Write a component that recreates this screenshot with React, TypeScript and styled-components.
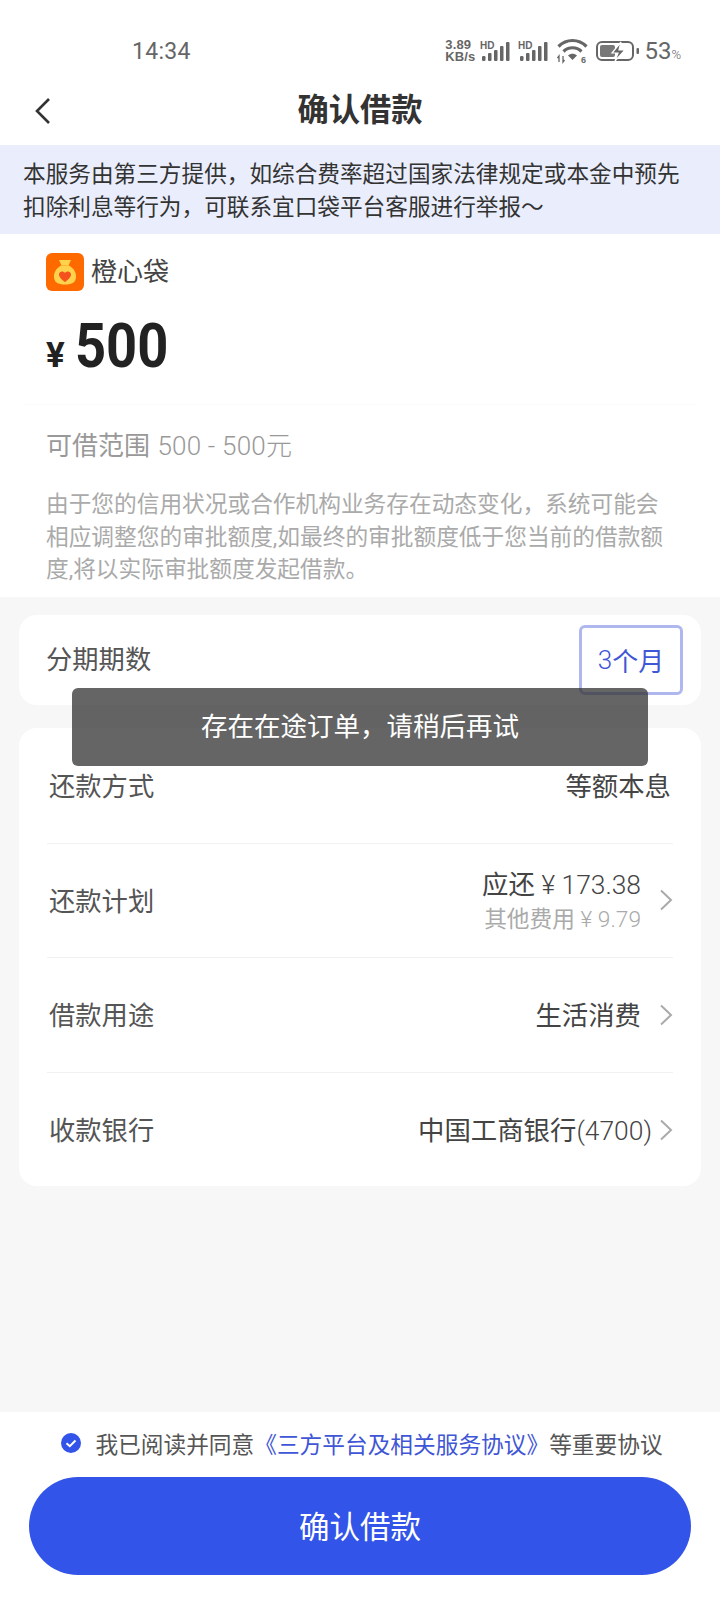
import React from "react";
import styled, { createGlobalStyle } from "styled-components";

const Global = createGlobalStyle`
  html, body { margin: 0; padding: 0; background: #fff; }
  * { box-sizing: border-box; }
`;
const Page = styled.div`
  position: relative; width: 720px; height: 1600px; display: flex; flex-direction: column;
  background: #f7f7f7; overflow: hidden;
  font-family: Roboto, "Noto Sans CJK SC", sans-serif; color: #333;
`;
const StatusBar = styled.div`
  height: 78px; background: #fff; display: flex; align-items: center; justify-content: space-between;
  padding: 24px 39px 0 132px; flex: none;
`;
const Time = styled.span`font-size: 23px; color: #666; letter-spacing: .3px;`;
const StatusRight = styled.div`display: flex; align-items: center;`;
const Speed = styled.div`
  display: flex; flex-direction: column; font-size: 13px; line-height: 12px; font-weight: 700; color: #666;
  font-family: "Liberation Sans", sans-serif; margin-right: 5px; letter-spacing: .1px;
`;
const Battery = styled.span`font-size: 24px; color: #666; margin-left: 4px; display: flex; align-items: baseline;`;
const Percent = styled.span`font-size: 13px; font-weight: 300;`;
const NavBar = styled.div`
  height: 67px; padding-bottom: 8px; background: #fff; display: flex; align-items: center; justify-content: center; position: relative; flex: none;
`;
const BackIcon = styled.svg`position: absolute; left: 34px; top: 19px;`;
const Title = styled.div`font-size: 31.3px; font-weight: 700; color: #333;`;
const Notice = styled.div`
  height: 89px; background: #eaeefc; padding: 13px 20px 0 23px; font-size: 22.65px; line-height: 33px; color: #333; flex: none;
  white-space: nowrap;
`;
const Summary = styled.div`background: #fff; height: 363px; padding: 19px 23px 0 46px; flex: none;`;
const Lender = styled.div`display: flex; align-items: center; gap: 7px; height: 38px;`;
const LenderName = styled.span`font-size: 26px; color: #444; margin-top: -5px;`;
const Amount = styled.div`display: flex; align-items: baseline; height: 74px; margin-top: 18px; line-height: 74px; color: #222; font-weight: 700;`;
const Yen = styled.span`font-size: 35px; margin-right: 10px;`;
const Money = styled.span`font-size: 62px; display: inline-block; transform: scaleX(.875); transform-origin: left center;`;
const Range = styled.div`
  margin: 21px 0 0 -23px; padding: 21px 0 0 23px; border-top: 1px solid #fafafa; font-size: 26px; line-height: 40px; color: #999;
`;
const RangeNum = styled.span`font-size: 26px; font-weight: 300; margin-left: 1px; letter-spacing: .2px;`;
const Hint = styled.div`margin-top: 23px; font-size: 22.7px; line-height: 32.5px; color: #aaa; white-space: nowrap;`;
const Card = styled.div`background: #fff; border-radius: 18px; margin: 0 19px; flex: none;`;
const TermCard = styled(Card)`
  margin-top: 18px; height: 90px; display: flex; align-items: center; justify-content: space-between; padding: 0 18px 0 27px;
`;
const TermLabel = styled.span`font-size: 26.3px; color: #555; margin-top: -6px;`;
const TermBox = styled.div`
  width: 104px; height: 70px; border: 3px solid #aeb8ee; border-radius: 6px; color: #3f56d6; font-size: 26px;
  display: flex; align-items: center; justify-content: center; padding-bottom: 1px;
`;
const Num = styled.span`font-weight: 300;`;
const DetailCard = styled(Card)`margin-top: 23px; height: 458px; padding: 0 28px;`;
const Row = styled.div`
  height: 114.6px; display: flex; align-items: center; justify-content: space-between;
  & + & { border-top: 1px solid #f1f1f1; }
`;
const RowLabel = styled.span`font-size: 26.3px; color: #555; margin: -2px 0 0 2px;`;
const RowRight = styled.div`display: flex; align-items: center;`;
const Value = styled.span`font-size: 26.4px; color: #444; white-space: nowrap; margin-top: -2px;`;
const PlainValue = styled(Value)`margin-right: 2px;`;
const Stack = styled.div`display: flex; flex-direction: column; align-items: flex-end; margin-top: 4px;`;
const Primary = styled.span`font-size: 26.4px; line-height: 35px; color: #444; white-space: nowrap;`;
const Secondary = styled.span`font-size: 22.7px; line-height: 33px; color: #aaa; white-space: nowrap;`;
const Chevron = styled.svg<{ $gap: number }>`margin-left: ${(p) => p.$gap}px; flex: none;`;
const Spacer = styled.div`flex: 1;`;
const Footer = styled.div`background: #fff; height: 188px; padding: 14px 29px 0; flex: none;`;
const Agree = styled.div`
  height: 34px; display: flex; align-items: center; justify-content: center; font-size: 22.7px; color: #555; white-space: nowrap; margin-left: 4px;
`;
const Check = styled.svg`margin-right: 14px; flex: none;`;
const Link = styled.span`color: #3f56d6;`;
const Submit = styled.button`
  display: block; width: 662px; height: 98px; margin-top: 17px; border: 0; border-radius: 49px; background: #3354e8;
  color: #fff; font-family: inherit; font-size: 30.5px; padding: 0 0 3px;
`;
const Toast = styled.div`
  position: absolute; left: 72px; top: 688px; width: 576px; height: 78px; border-radius: 6px;
  background: rgba(50,50,50,.75); color: #fff; font-size: 26.5px; display: flex; align-items: center; justify-content: center; padding-bottom: 6px;
`;

const Signal = () => (
  <svg width="32" height="21" viewBox="0 0 32 21" style={{ marginRight: 6 }}>
    <text x="0" y="8" fontSize="10" fontWeight="700" fontFamily="Liberation Sans" fill="#666">HD</text>
    <g fill="#666">
      <rect x="2" y="15" width="3.500" height="5" rx="1.200" /><rect x="8" y="12" width="3.500" height="8" rx="1" />
      <rect x="14" y="9" width="3.500" height="11" rx="1" /><rect x="20" y="5" width="3.500" height="15" rx="1" />
      <rect x="26" y="1" width="3.500" height="19" rx="1" />
    </g>
  </svg>
);
const Chev = ({ gap = 18 }: { gap?: number }) => (
  <Chevron $gap={gap} width="14" height="22" viewBox="0 0 14 22"><path d="M2 1.500 12 11 2 20.500" fill="none" stroke="#aaa" strokeWidth="2" /></Chevron>
);

export default function App() {
  return (
    <Page>
      <Global />
      <StatusBar>
        <Time>14:34</Time>
        <StatusRight>
          <Speed><span>3.89</span><span>KB/s</span></Speed>
          <Signal /><Signal />
          <svg width="31" height="26" viewBox="0 0 31 26" style={{ marginRight: 8, marginLeft: 1 }}>
            <g fill="none" stroke="#666" strokeWidth="3.200">
              <path d="M1.500 8.500C9.500 .5 21.500 .5 29.500 8.500" /><path d="M6.500 13.500c5-5 13-5 18 0" />
            </g>
            <path d="M11 17.500c2.500-2.500 6.500-2.500 9 0l-4.500 4.500z" fill="#666" />
            <text x="24" y="25" fontSize="9" fontWeight="700" fontFamily="Liberation Sans" fill="#666">6</text>
            <path d="M2 24v-6l-1.500 2M6 18v6l1.500-2" fill="none" stroke="#666" strokeWidth="1.300" />
          </svg>
          <svg width="44" height="20" viewBox="0 0 44 20">
            <rect x="1" y="1" width="36" height="18" rx="5" fill="none" stroke="#666" strokeWidth="2" />
            <rect x="4" y="4" width="15" height="12" rx="2" fill="#777" />
            <path d="M25 1 16 12h6l-3 8 10-11h-6z" fill="#666" stroke="#fff" strokeWidth="1.200" />
            <rect x="40.500" y="7" width="2.500" height="6" rx="1" fill="#666" />
          </svg>
          <Battery>53<Percent>%</Percent></Battery>
        </StatusRight>
      </StatusBar>
      <NavBar>
        <BackIcon width="18" height="28" viewBox="0 0 18 28"><path d="M15 2 3 14l12 12" fill="none" stroke="#333" strokeWidth="2.600" /></BackIcon>
        <Title>确认借款</Title>
      </NavBar>
      <Notice>本服务由第三方提供，如综合费率超过国家法律规定或本金中预先<br />扣除利息等行为，可联系宜口袋平台客服进行举报～</Notice>
      <Summary>
        <Lender>
          <svg width="38" height="38" viewBox="0 0 38 38">
            <rect width="38" height="38" rx="6" fill="#ff6a00" />
            <path d="M13 7h12l-2.500 5.500h-7z" fill="#ffd24d" />
            <path d="M15 12.500h8c5 3 7 7 7 11 0 6-4 8-11 8s-11-2-11-8c0-4 2-8 7-11z" fill="#ffd24d" />
            <path d="M19 29c-3-2.500-6-4.600-6-7.600 0-3.200 4.400-4 6-1.400 1.600-2.600 6-1.800 6 1.400 0 3-3 5.100-6 7.600z" fill="#f4511e" />
          </svg>
          <LenderName>橙心袋</LenderName>
        </Lender>
        <Amount><Yen>¥</Yen><Money>500</Money></Amount>
        <Range>可借范围 <RangeNum>500 - 500元</RangeNum></Range>
        <Hint>由于您的信用状况或合作机构业务存在动态变化，系统可能会<br />相应调整您的审批额度,如最终的审批额度低于您当前的借款额<br />度,将以实际审批额度发起借款。</Hint>
      </Summary>
      <TermCard>
        <TermLabel>分期期数</TermLabel>
        <TermBox><Num>3</Num>个月</TermBox>
      </TermCard>
      <DetailCard>
        <Row><RowLabel>还款方式</RowLabel><PlainValue>等额本息</PlainValue></Row>
        <Row>
          <RowLabel>还款计划</RowLabel>
          <RowRight>
            <Stack>
              <Primary>应还 <Num>¥ 173.38</Num></Primary>
              <Secondary>其他费用 <Num>¥ 9.79</Num></Secondary>
            </Stack>
            <Chev />
          </RowRight>
        </Row>
        <Row><RowLabel>借款用途</RowLabel><RowRight><Value>生活消费</Value><Chev /></RowRight></Row>
        <Row><RowLabel>收款银行</RowLabel><RowRight><Value>中国工商银行<Num>(4700)</Num></Value><Chev gap={7} /></RowRight></Row>
      </DetailCard>
      <Spacer />
      <Footer>
        <Agree>
          <Check width="20" height="20" viewBox="0 0 20 20">
            <circle cx="10" cy="10" r="10" fill="#3354e8" />
            <path d="M5.500 10.200 8.800 13.200 14.500 7.500" fill="none" stroke="#fff" strokeWidth="2" />
          </Check>
          我已阅读并同意<Link>《三方平台及相关服务协议》</Link>等重要协议
        </Agree>
        <Submit>确认借款</Submit>
      </Footer>
      <Toast>存在在途订单，请稍后再试</Toast>
    </Page>
  );
}
